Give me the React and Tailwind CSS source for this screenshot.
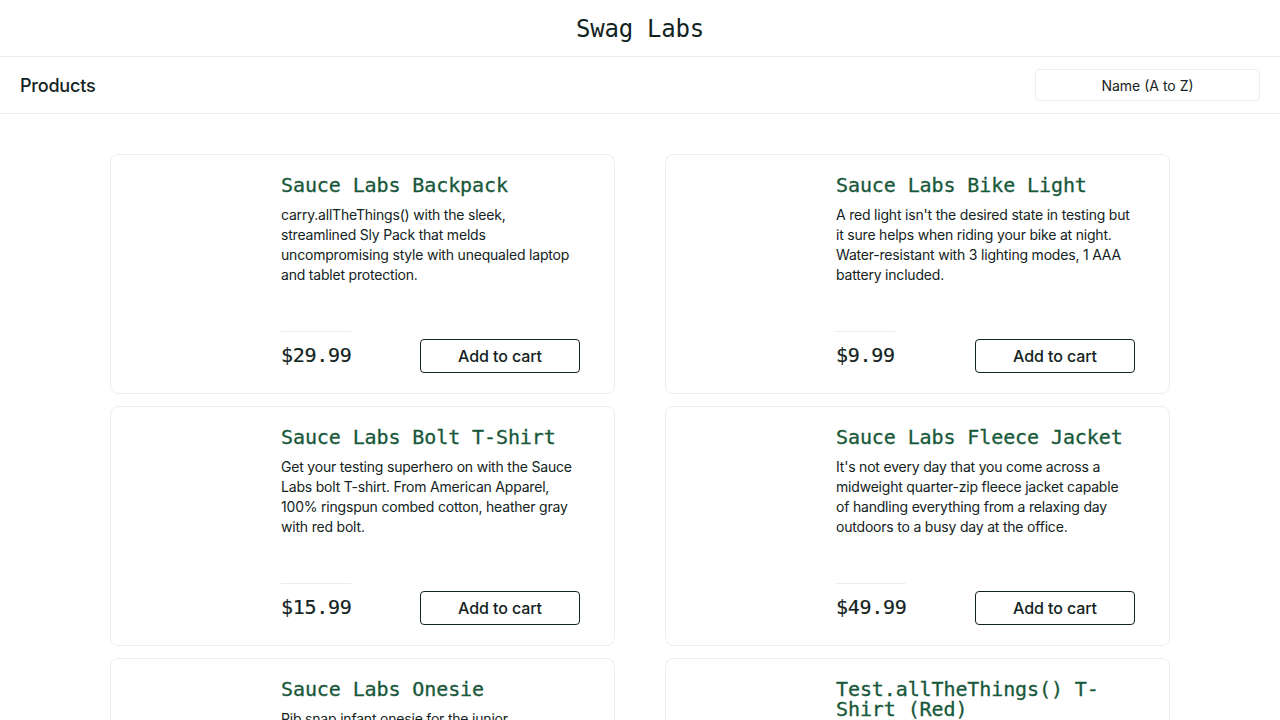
import React from 'react';

const products = [
  {
    name: 'Sauce Labs Backpack',
    desc: 'carry.allTheThings() with the sleek, streamlined Sly Pack that melds uncompromising style with unequaled laptop and tablet protection.',
    price: '$29.99',
  },
  {
    name: 'Sauce Labs Bike Light',
    desc: "A red light isn't the desired state in testing but it sure helps when riding your bike at night. Water-resistant with 3 lighting modes, 1 AAA battery included.",
    price: '$9.99',
  },
  {
    name: 'Sauce Labs Bolt T-Shirt',
    desc: 'Get your testing superhero on with the Sauce Labs bolt T-shirt. From American Apparel, 100% ringspun combed cotton, heather gray with red bolt.',
    price: '$15.99',
  },
  {
    name: 'Sauce Labs Fleece Jacket',
    desc: "It's not every day that you come across a midweight quarter-zip fleece jacket capable of handling everything from a relaxing day outdoors to a busy day at the office.",
    price: '$49.99',
  },
  {
    name: 'Sauce Labs Onesie',
    desc: "Rib snap infant onesie for the junior automation engineer in development. Reinforced 3-snap bottom delivers lasting durability.",
    price: '$7.99',
  },
  {
    name: 'Test.allTheThings() T-Shirt (Red)',
    desc: 'This classic Sauce Labs t-shirt is perfect to wear when cozying up to your keyboard to automate a few tests. Super-soft and comfy ringspun combed cotton.',
    price: '$15.99',
  },
];

const mono = "font-['DejaVu_Sans_Mono',monospace]";

const ProductCard = ({ item }) => (
  <div className="flex h-[240px] rounded-lg border border-[#ededed] bg-white">
    <div className="w-[170px] shrink-0" />
    <div className="flex flex-1 flex-col justify-between pb-5 pr-[34px] pt-5">
      <div>
        <div className={`${mono} text-[20px] leading-5 tracking-[-0.1px] text-[#18583a] [-webkit-text-stroke:0.3px_#18583a]`}>
          {item.name}
        </div>
        <p className="mt-2.5 text-[14px] leading-5 tracking-[-0.2px] text-[#132322]">{item.desc}</p>
      </div>
      <div className="flex items-end justify-between">
        <div className={`${mono} border-t border-[#ededed] pb-2 pt-[13px] text-[20px] leading-5 tracking-[-0.3px] text-[#132322] [-webkit-text-stroke:0.2px_#132322]`}>
          {item.price}
        </div>
        <button
          type="button"
          className="h-[34px] w-40 rounded border border-[#132322] text-[16px] font-medium tracking-[-0.1px] text-[#132322]"
        >
          Add to cart
        </button>
      </div>
    </div>
  </div>
);

export default function App() {
  return (
    <div className="min-h-screen bg-white font-['Inter',sans-serif] text-[#132322]">
      <header className="flex h-[57px] items-center justify-center border-b border-[#ededed] pt-px">
        <h1 className={`${mono} text-[24px] tracking-[-0.25px]`}>Swag Labs</h1>
      </header>
      <div className="flex h-[57px] items-center justify-between border-b border-[#ededed] px-5">
        <span className="text-[18px] font-medium tracking-[-0.2px]">Products</span>
        <div className="flex h-8 w-[225px] items-center justify-center rounded border border-[#ededed] text-[14px]">
          Name (A to Z)
        </div>
      </div>
      <main className="mx-auto grid w-[1060px] grid-cols-2 gap-x-[50px] gap-y-3 pt-10">
        {products.map((p) => (
          <ProductCard key={p.name} item={p} />
        ))}
      </main>
    </div>
  );
}
